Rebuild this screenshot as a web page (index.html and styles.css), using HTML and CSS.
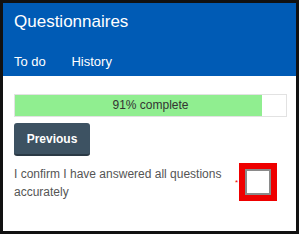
FILE: index.html
```html
<!DOCTYPE html>
<html lang="en">
  <head>
    <meta charset="utf-8" />
    <meta name="viewport" content="width=device-width, initial-scale=1.0" />
    <title>Questionnaires</title>
    <link rel="stylesheet" href="styles.css">
  </head>
  <body>
    <div class="frame">
      <div class="header">
        <div class="title">Questionnaires</div>
        <div class="tabs">
          <span class="tab">To do</span>
          <span class="tab">History</span>
        </div>
      </div>

      <div class="content">
        <div class="progress">
          <div class="progress-fill" style="width: 91%"></div>
          <div class="progress-label">91% complete</div>
        </div>

        <button class="btn-prev">Previous</button>

        <div class="confirm">
          <div class="confirm-text">I confirm I have answered all questions accurately</div>
          <span class="required">*</span>
          <span class="check"><span class="check-box"></span></span>
        </div>
      </div>
    </div>
  </body>
</html>
```

FILE: styles.css
```css
html, body {
    margin: 0;
    padding: 0;
    background: #fff;
}

.frame {
    box-sizing: border-box;
    width: 299px;
    height: 234px;
    border: 3px solid #111;
    font-family: "Liberation Sans", Arial, sans-serif;
    overflow: hidden;
}

.header {
    background: #005bb5;
    color: #fff;
    padding: 7px 11px 5px;
}

.title {
    font-size: 17px;
    line-height: 24px;
}

.tabs {
    margin-top: 19px;
    font-size: 13px;
    line-height: 18px;
}

.tab {
    margin-right: 22px;
}

.content {
    padding: 18px 9px 0 11px;
}

.progress {
    display: grid;
    height: 23px;
    box-sizing: border-box;
    border: 1px solid #e2e2e2;
    background: #fff;
}

.progress-fill,
.progress-label {
    grid-area: 1 / 1;
}

.progress-fill {
    background: #90ee90;
}

.progress-label {
    font-size: 12px;
    line-height: 21px;
    text-align: center;
    color: #333;
}

.btn-prev {
    display: block;
    margin-top: 6px;
    width: 76px;
    height: 33px;
    padding: 0;
    border: none;
    border-bottom: 2px solid #2a3945;
    border-radius: 3px;
    background: #3d5262;
    color: #fff;
    font-family: "Liberation Sans", Arial, sans-serif;
    font-weight: bold;
    font-size: 12px;
}

.confirm {
    display: flex;
    align-items: flex-start;
    margin-top: 7px;
}

.confirm-text {
    width: 218px;
    padding-top: 2px;
    font-size: 12px;
    line-height: 18px;
    color: #555;
}

.required {
    align-self: center;
    margin: 0 1px 0 3px;
    color: #e00;
    font-size: 8px;
}

.check {
    box-sizing: border-box;
    width: 38px;
    height: 38px;
    border: 6px solid #ee0000;
    background: #fff;
}

.check-box {
    display: block;
    box-sizing: border-box;
    width: 26px;
    height: 26px;
    border: 2px solid #8a8a8a;
    background: #fff;
}
```
